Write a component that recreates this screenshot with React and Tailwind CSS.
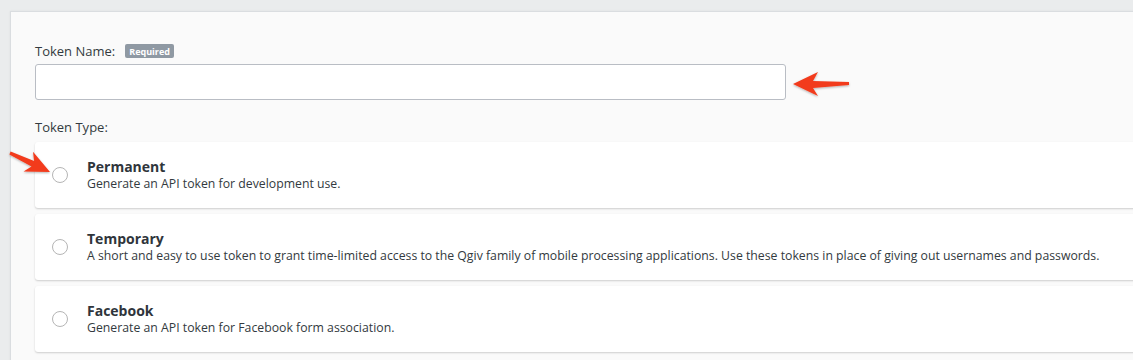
import React from "react";

const cards = [
  { title: "Permanent", desc: "Generate an API token for development use." },
  {
    title: "Temporary",
    desc: "A short and easy to use token to grant time-limited access to the Qgiv family of mobile processing applications. Use these tokens in place of giving out usernames and passwords.",
  },
  { title: "Facebook", desc: "Generate an API token for Facebook form association." },
];

export default function App() {
  return (
    <div
      className="relative h-[360px] w-[1133px] overflow-hidden bg-[#eaeced] pl-[10px] pt-[11px] text-[#333a40]"
      style={{ fontFamily: "'Open Sans', sans-serif" }}
    >
      <div className="w-[1200px] h-[400px] border border-[#dadde0] bg-[#fafafa] pl-[24px] pt-[31px] shadow-[0_0_2px_rgba(0,0,0,0.06)]">
        <div className="flex items-center h-[16px]">
          <span className="text-[13px] leading-none">Token Name:</span>
          <span className="ml-[10px] rounded-[2px] bg-[#8f99a3] px-[4px] h-[14px] flex items-center text-[9px] font-bold text-white leading-none">
            Required
          </span>
        </div>
        <div className="mt-[5px] h-[36px] w-[751px] rounded-[3px] border border-[#b9bdc4] bg-white"></div>
        <div className="mt-[21px] text-[13px] leading-none">Token Type:</div>
        <div className="mt-[8px] flex flex-col gap-[6px]">
          {cards.map((c) => (
            <div
              key={c.title}
              className="flex h-[66px] items-center rounded-[3px] bg-white pl-[17px] shadow-[0_1px_2px_rgba(0,0,0,0.18)]"
            >
              <div className="h-[16px] w-[16px] shrink-0 rounded-full border border-[#b5b5b5] bg-white"></div>
              <div className="ml-[19px] flex flex-col">
                <div className="text-[14px] font-bold leading-[18px] text-[#2f353b]">{c.title}</div>
                <div className="text-[12.27px] leading-[16px]">{c.desc}</div>
              </div>
            </div>
          ))}
        </div>
      </div>
      <svg className="pointer-events-none absolute left-0 top-0" width="1133" height="360">
        <defs>
          <filter id="sh" x="-20%" y="-20%" width="140%" height="140%">
            <feDropShadow dx="0" dy="1" stdDeviation="0.8" floodColor="#000" floodOpacity="0.3" />
          </filter>
        </defs>
        <path
          d="M793 84 L818 72 L813 81 L849 82 L849 85 L813 88 L818 96 Z"
          fill="#f23b1c"
          filter="url(#sh)"
        />
        <path
          d="M50 172 L33 151.8 L34.1 161.1 L10.6 151.6 L9.4 154.4 L31.5 166.5 L23.6 171.6 Z"
          fill="#f23b1c"
          filter="url(#sh)"
        />
      </svg>
    </div>
  );
}
